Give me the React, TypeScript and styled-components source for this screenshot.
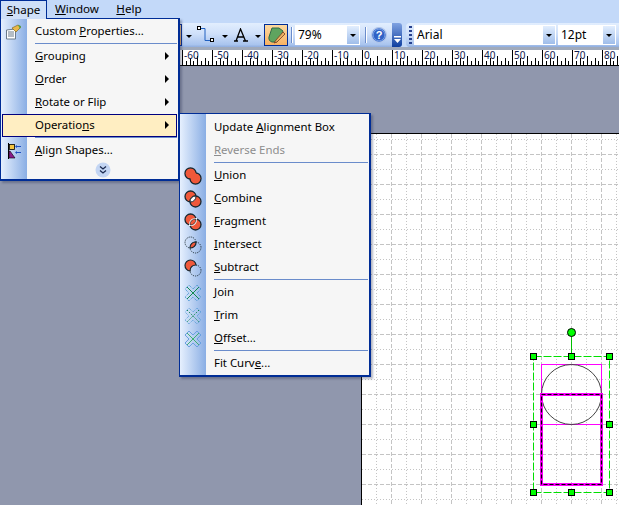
import React from 'react'
import styled, { createGlobalStyle } from 'styled-components'

const GlobalStyle = createGlobalStyle`
  html, body {
    margin: 0;
    padding: 0;
    overflow: hidden;
    background: #9097ad;
  }
  * {
    box-sizing: border-box;
  }
`

const Window = styled.div`
  position: relative;
  width: 619px;
  height: 505px;
  overflow: hidden;
  display: flex;
  flex-direction: column;
  font-family: "Noto Sans", "Liberation Sans", sans-serif;
  font-size: 11.4px;
  color: #000;
`

const MenuBar = styled.div`
  display: flex;
  align-items: flex-start;
  height: 23px;
  flex: none;
  background: #c3d9f9;
`

const MenuTitle = styled.div<{ $open?: boolean; $width: number }>`
  width: ${p => p.$width}px;
  height: ${p => (p.$open ? 19 : 18)}px;
  text-align: center;
  line-height: 18px;
  font-size: 11.6px;
  ${p => p.$open && `
    background: #cfe0f8;
    border: 1px solid #002d96;
    border-bottom: none;
    position: relative;
    z-index: 3;
  `}
`

const ToolBand = styled.div`
  display: flex;
  height: 24px;
  flex: none;
  background: #c3d9f9;
`

const Toolbar = styled.div<{ $width: number }>`
  display: flex;
  align-items: center;
  width: ${p => p.$width}px;
  height: 24px;
  flex: none;
  background: linear-gradient(#e2eefe 0%, #cfe0fa 45%, #a9c4ee 90%, #8fadde 100%);
`

const ToolbarLeft = styled(Toolbar)`
  border-radius: 0 4px 4px 0;
  justify-content: flex-end;
`

const ToolbarRight = styled(Toolbar)`
  margin-left: 4px;
  border-radius: 4px 0 0 4px;
  padding-left: 3px;
  flex: 1;
`

const OrangeButton = styled.div<{ $width: number }>`
  display: flex;
  align-items: center;
  justify-content: center;
  width: ${p => p.$width}px;
  height: 22px;
  background: linear-gradient(#fcd9a0, #f8b263);
  border: 1px solid #002d96;
`

const DropArrow = styled.span<{ $gap?: number }>`
  width: 0;
  height: 0;
  margin: 2px ${p => p.$gap ?? 4}px 0 4px;
  border-left: 3px solid transparent;
  border-right: 3px solid transparent;
  border-top: 3px solid #000;
`

const Separator = styled.div`
  width: 1px;
  height: 16px;
  margin: 0 3px;
  background: #6a8ccb;
  box-shadow: 1px 0 0 #fff;
`

const Combo = styled.div<{ $width: number }>`
  display: flex;
  width: ${p => p.$width}px;
  height: 20px;
  padding: 1px;
  margin-right: 2px;
  background: #fff;
  font-size: 12px;
  line-height: 18px;
`

const ComboValue = styled.div`
  flex: 1;
  padding-left: 2px;
`

const ComboButton = styled.div`
  display: flex;
  align-items: center;
  justify-content: center;
  width: 12px;
  background: linear-gradient(#e2eefe, #9fbdea);
`

const ComboArrow = styled.span`
  width: 0;
  height: 0;
  border-left: 3px solid transparent;
  border-right: 3px solid transparent;
  border-top: 3px solid #000;
`

const ToolIcon = styled.div<{ $margin?: string }>`
  display: flex;
  align-items: center;
  margin: ${p => p.$margin ?? '0'};
`

const Overflow = styled.div`
  display: flex;
  flex-direction: column;
  align-items: center;
  justify-content: flex-end;
  width: 10px;
  height: 24px;
  margin-left: 5px;
  padding-bottom: 3px;
  border-radius: 0 3px 3px 0;
  background: linear-gradient(#7fa2e2, #0f3f9f);
`

const Grip = styled.div`
  width: 3px;
  height: 18px;
  margin-right: 2px;
  background: repeating-linear-gradient(#27418f 0 2px, transparent 2px 4px);
`

const RulerStrip = styled.svg`
  display: block;
  flex: none;
  width: 619px;
  height: 19px;
  background: #fff;
`

const Workspace = styled.div`
  flex: 1;
  display: flex;
  padding: 67px 0 0 361px;
  background: #9097ad;
`

const Page = styled.div`
  position: relative;
  flex: 1;
  border-left: 1px solid #000;
  border-top: 1px solid #000;
  background: #fff;
`

const Canvas = styled.svg`
  position: absolute;
  left: 0;
  top: 0;
  width: 257px;
  height: 371px;
`

const Menu = styled.div<{ $left: number; $top: number; $width: number; $pad: string }>`
  position: absolute;
  z-index: 2;
  left: ${p => p.$left}px;
  top: ${p => p.$top}px;
  width: ${p => p.$width}px;
  padding: ${p => p.$pad};
  border: 2px solid #002d96;
  border-width: 1px 2px 2px 1px;
  background: linear-gradient(90deg, #e6f0fe 0, #8aaee4 26px, #f6f6f6 26px);
  box-shadow: 2px 2px 2px rgba(40, 50, 80, 0.35);
`

const Item = styled.div<{ $hot?: boolean; $disabled?: boolean; $indent: number }>`
  display: flex;
  align-items: center;
  height: 23px;
  padding-left: ${p => p.$indent}px;
  padding-bottom: 2px;
  position: relative;
  color: ${p => (p.$disabled ? '#8d8d8d' : '#000')};
  ${p => p.$hot && `
    background: #ffeec2;
    outline: 1px solid #000080;
    outline-offset: -1px;
  `}
`

const ItemIcon = styled.span`
  position: absolute;
  left: 3px;
  top: 3px;
  width: 18px;
  height: 18px;
`

const ItemLabel = styled.span`
  flex: 1;
  white-space: pre;
`

const Arrow = styled.span`
  width: 0;
  height: 0;
  margin-right: 8px;
  border-top: 4px solid transparent;
  border-bottom: 4px solid transparent;
  border-left: 4px solid #000;
`

const Rule = styled.div<{ $indent: number }>`
  height: 1px;
  margin: 0 0 1px ${p => p.$indent}px;
  background: #6a8ccb;
`

const Expand = styled.div`
  display: flex;
  align-items: center;
  justify-content: center;
  height: 16px;
  padding-left: 26px;
`

const ExpandDot = styled.svg`
  width: 16px;
  height: 16px;
`

const Accel = ({ text, at }: { text: string; at: number }) => (
  <>
    {text.slice(0, at)}
    <u>{text[at]}</u>
    {text.slice(at + 1)}
  </>
)

const Red = '#f0583a'
const Edge = '#182830'
const Lens = 'M11.98 6.02A5.5 5.5 0 0 1 6.02 11.98 5.5 5.5 0 0 1 11.98 6.02z'
const Cross = 'M9 5l4-4 4 4-4 4 4 4-4 4-4-4-4 4-4-4 4-4-4-4 4-4z'

function OpIcon({ kind }: { kind: string }) {
  const common = { width: 18, height: 18, viewBox: '0 0 18 18' }
  if (kind === 'union')
    return (
      <svg {...common}>
        <circle cx="6.5" cy="6.5" r="5.5" fill={Red} stroke={Edge} strokeWidth="1.4" />
        <circle cx="11.5" cy="11.5" r="5.5" fill={Red} stroke={Edge} strokeWidth="1.4" />
        <circle cx="6.5" cy="6.5" r="4.8" fill={Red} />
        <circle cx="11.5" cy="11.5" r="4.8" fill={Red} />
        <path d="M6 8l4 4 2-6-4-2z" fill={Red} />
      </svg>
    )
  if (kind === 'combine')
    return (
      <svg {...common}>
        <circle cx="6.5" cy="6.5" r="5.5" fill={Red} stroke={Edge} strokeWidth="1.3" />
        <circle cx="11.5" cy="11.5" r="5.5" fill={Red} stroke={Edge} strokeWidth="1.3" />
        <path d={Lens} fill="#fff" stroke={Edge} strokeWidth="1" />
      </svg>
    )
  if (kind === 'fragment')
    return (
      <svg {...common}>
        <circle cx="6.5" cy="6.5" r="5.5" fill={Red} stroke={Edge} strokeWidth="1.3" />
        <circle cx="11.5" cy="11.5" r="5.5" fill={Red} stroke={Edge} strokeWidth="1.3" />
        <path d={Lens} fill={Red} stroke="#fff" strokeWidth="2.2" />
        <path d={Lens} fill={Red} stroke={Edge} strokeWidth=".7" />
      </svg>
    )
  if (kind === 'intersect')
    return (
      <svg {...common}>
        <circle cx="6.5" cy="6.5" r="5.5" fill="none" stroke={Edge} strokeWidth="1" strokeDasharray="1 1" />
        <circle cx="11.5" cy="11.5" r="5.5" fill="none" stroke={Edge} strokeWidth="1" strokeDasharray="1 1" />
        <path d={Lens} fill={Red} stroke={Edge} strokeWidth="1.1" />
      </svg>
    )
  if (kind === 'subtract')
    return (
      <svg {...common}>
        <circle cx="11.5" cy="11.5" r="5.5" fill="none" stroke={Edge} strokeWidth="1" strokeDasharray="1 1" />
        <path d="M11.98 6.02A5.5 5.5 0 1 0 6.02 11.98 5.5 5.5 0 0 1 11.98 6.02z" fill={Red} stroke={Edge} strokeWidth="1.2" />
      </svg>
    )
  return (
    <svg {...common}>
      <path
        d={Cross}
        fill="none"
        stroke={kind === 'offset' ? '#6aa0e0' : '#3f90d0'}
        strokeWidth="1"
        strokeDasharray={kind === 'offset' ? undefined : '1 1'}
        opacity={kind === 'trim' ? 0.8 : 1}
      />
      <path
        d="M3 3l12 12M15 3L3 15"
        stroke={kind === 'offset' ? '#40b070' : '#128a50'}
        strokeWidth="1"
        fill="none"
        strokeDasharray={kind === 'trim' ? '1.5 1.5' : undefined}
      />
    </svg>
  )
}

const PropertiesIcon = () => (
  <svg width="18" height="18" viewBox="0 0 18 18">
    <path d="M1.5 7l9-1v10h-9z" fill="#fff" stroke="#6b7a8a" />
    <path d="M3 9h6M3 11h6M3 13h6" stroke="#6b7a8a" />
    <path d="M7 5l6-3 3 2-5 5z" fill="#e8b84a" stroke="#8a6a20" strokeWidth=".7" />
    <path d="M13 2l3 1-1 3z" fill="#4aa04a" />
  </svg>
)

const AlignIcon = () => (
  <svg width="18" height="18" viewBox="0 0 18 18">
    <path d="M3.5 1v16" stroke="#000" />
    <rect x="4.5" y="2.5" width="5" height="5" fill="#f5c542" stroke="#000" strokeWidth=".8" />
    <path d="M4 9h1l5 7H4z" fill="#8a1a8a" stroke="#000" strokeWidth=".6" />
    <path d="M11 4.5h5M11 10.5h5" stroke="#2050c0" />
    <path d="M12 3l-2 1.5 2 1.5zM12 9l-2 1.5 2 1.5z" fill="#2050c0" />
  </svg>
)

const ConnectorIcon = () => (
  <svg width="18" height="18" viewBox="0 0 18 18">
    <path d="M3 2.5h5v12h6" fill="none" stroke="#2060c0" />
    <rect x="0.5" y="0.5" width="3" height="3" fill="#fff" stroke="#000" />
    <rect x="13.5" y="12.5" width="3" height="3" fill="#fff" stroke="#000" />
  </svg>
)

const ShapeFormatIcon = () => (
  <svg width="18" height="18" viewBox="0 0 18 18">
    <path d="M5 2h7l4 3-2 5-4 6H5a4 4 0 0 1-3-5z" fill="#5fa45f" stroke="#2f6a4a" />
    <path d="M16 6L9 14l-2 3 3-1 8-8z" fill="#e8b060" stroke="#7a3a20" strokeWidth=".8" />
  </svg>
)

const HelpIcon = () => (
  <svg width="16" height="16" viewBox="0 0 16 16">
    <circle cx="8" cy="8" r="7.4" fill="#3b6fd0" stroke="#b5c8ea" strokeWidth="1.2" />
    <circle cx="8" cy="8" r="5.8" fill="#2f62c6" stroke="#7fa3e4" strokeWidth=".8" />
    <text x="8" y="12" textAnchor="middle" fontSize="11" fontWeight="700" fontFamily="'Liberation Sans', sans-serif" fill="#fff">?</text>
  </svg>
)

const OverflowIcon = () => (
  <svg width="7" height="8" viewBox="0 0 7 8">
    <path d="M0 0h7v1.5H0zM0 3h7L3.5 7z" fill="#fff" />
  </svg>
)

const labels = [-60, -50, -40, -30, -20, -10, 0, 10, 20, 30, 40, 50, 60, 70, 80]

function Ruler() {
  const ticks = []
  for (let i = 0; i < 120; i++) {
    const x = Math.round(182 + i * 3.75)
    const step = i % 8
    const top = step === 0 ? 3 : step === 4 ? 9 : step % 2 === 0 ? 11 : 14
    ticks.push(<line key={i} x1={x + 0.5} x2={x + 0.5} y1={top} y2={18} stroke="#000" />)
  }
  return (
    <RulerStrip viewBox="0 0 619 19">
      <rect x="0" y="0" width="619" height="3" fill="#a0aabb" />
      {ticks}
      {labels.map((n, i) => (
        <text key={n} x={184 + i * 30} y={12} fontSize="10" fontFamily="'Noto Sans', sans-serif" fill="#102050">
          {n}
        </text>
      ))}
      <line x1="0" x2="619" y1="18.5" y2="18.5" stroke="#000" />
    </RulerStrip>
  )
}

function Drawing() {
  const lines = []
  for (let i = 0; i < 18; i++) {
    const x = 15 * i + 14.5
    lines.push(
      <line key={'v' + i} x1={x} x2={x} y1={0} y2={371} stroke="#c4c4c4" strokeDasharray={i % 2 === 1 ? '4 2' : '1 2'} />
    )
  }
  for (let i = 0; i < 26; i++) {
    const y = 15 * i + 5.5
    lines.push(
      <line key={'h' + i} x1={0} x2={257} y1={y} y2={y} stroke="#c4c4c4" strokeDasharray={i % 2 === 1 ? '4 2' : '1 2'} />
    )
  }
  const xs = [171.5, 209.5, 247.5]
  const ys = [222.5, 290.5, 358.5]
  const handles = xs.flatMap(x => ys.map(y => [x, y])).filter(([x, y]) => !(x === 209.5 && y === 290.5))
  return (
    <Canvas viewBox="0 0 257 371">
      {lines}
      <rect x="171.5" y="222.5" width="76" height="136" fill="none" stroke="#00e000" strokeDasharray="8 2" />
      <line x1="209.5" x2="209.5" y1="198" y2="222" stroke="#00c000" />
      <rect x="179.5" y="230.5" width="60" height="60" fill="none" stroke="#ff00ff" />
      <circle cx="209.5" cy="260.5" r="30" fill="none" stroke="#444" />
      <rect x="179.5" y="260.5" width="60" height="90" fill="none" stroke="#ff00ff" strokeWidth="3" />
      <rect x="179.5" y="260.5" width="60" height="90" fill="none" stroke="#000" strokeWidth="1.2" strokeDasharray="4 2" />
      {handles.map(([x, y]) => (
        <rect key={x + '-' + y} x={x - 3} y={y - 3} width="6" height="6" fill="#00ff00" stroke="#000" />
      ))}
      <circle cx="209.5" cy="198.5" r="4" fill="#00ff00" stroke="#000" />
    </Canvas>
  )
}

const shapeItems = [
  { label: 'Grouping', at: 0 },
  { label: 'Order', at: 0 },
  { label: 'Rotate or Flip', at: 0 },
]

const opsItems = [
  { label: 'Union', at: 0, icon: 'union' },
  { label: 'Combine', at: 0, icon: 'combine' },
  { label: 'Fragment', at: 0, icon: 'fragment' },
  { label: 'Intersect', at: 0, icon: 'intersect' },
  { label: 'Subtract', at: 0, icon: 'subtract' },
]

const pathItems = [
  { label: 'Join', at: 0, icon: 'join' },
  { label: 'Trim', at: 0, icon: 'trim' },
  { label: 'Offset...', at: 0, icon: 'offset' },
]

export default function App() {
  return (
    <Window>
      <GlobalStyle />
      <MenuBar>
        <MenuTitle $open $width={47}><Accel text="Shape" at={0} /></MenuTitle>
        <MenuTitle $width={60}><Accel text="Window" at={0} /></MenuTitle>
        <MenuTitle $width={44}><Accel text="Help" at={0} /></MenuTitle>
      </MenuBar>
      <ToolBand>
        <ToolbarLeft $width={402}>
          <OrangeButton $width={16} />
          <DropArrow />
          <ToolIcon $margin="0 3px 0 1px"><ConnectorIcon /></ToolIcon>
          <DropArrow />
          <ToolIcon $margin="0 3px 0 1px">
            <svg width="15" height="14" viewBox="0 0 15 14">
              <path d="M1 13h4M10 13h5M3 13L7.5 1 12.5 13M4.7 9h6" fill="none" stroke="#000" strokeWidth="1.3" />
            </svg>
          </ToolIcon>
          <DropArrow $gap={3} />
          <OrangeButton $width={24}><ShapeFormatIcon /></OrangeButton>
          <Separator />
          <Combo $width={65}>
            <ComboValue>79%</ComboValue>
            <ComboButton><ComboArrow /></ComboButton>
          </Combo>
          <Separator />
          <ToolIcon $margin="0 0 0 2px"><HelpIcon /></ToolIcon>
          <Overflow><OverflowIcon /></Overflow>
        </ToolbarLeft>
        <ToolbarRight $width={213}>
          <Grip />
          <Combo $width={142}>
            <ComboValue>Arial</ComboValue>
            <ComboButton><ComboArrow /></ComboButton>
          </Combo>
          <Combo $width={58}>
            <ComboValue>12pt</ComboValue>
            <ComboButton><ComboArrow /></ComboButton>
          </Combo>
        </ToolbarRight>
      </ToolBand>
      <Ruler />
      <Workspace>
        <Page>
          <Drawing />
        </Page>
      </Workspace>

      <Menu $left={0} $top={18} $width={180} $pad="1px">
        <Item $indent={33}>
          <ItemIcon><PropertiesIcon /></ItemIcon>
          <ItemLabel>Custom <Accel text="Properties..." at={0} /></ItemLabel>
        </Item>
        <Rule $indent={33} />
        {shapeItems.map(i => (
          <Item key={i.label} $indent={33}>
            <ItemLabel><Accel text={i.label} at={i.at} /></ItemLabel>
            <Arrow />
          </Item>
        ))}
        <Item $hot $indent={33}>
          <ItemLabel><Accel text="Operations" at={8} /></ItemLabel>
          <Arrow />
        </Item>
        <Rule $indent={33} />
        <Item $indent={33}>
          <ItemIcon><AlignIcon /></ItemIcon>
          <ItemLabel><Accel text="Align Shapes..." at={0} /></ItemLabel>
        </Item>
        <Expand>
          <ExpandDot viewBox="0 0 16 16">
            <circle cx="8" cy="8" r="7.5" fill="#c3d5f3" />
            <path d="M5 4.5l3 2.5 3-2.5M5 8.5l3 2.5 3-2.5" fill="none" stroke="#1a2a50" strokeWidth="1.3" />
          </ExpandDot>
        </Expand>
      </Menu>

      <Menu $left={179} $top={113} $width={192} $pad="2px 1px 0">
        <Item $indent={33}><ItemLabel>Update <Accel text="Alignment Box" at={0} /></ItemLabel></Item>
        <Item $disabled $indent={33}><ItemLabel><Accel text="Reverse Ends" at={0} /></ItemLabel></Item>
        <Rule $indent={33} />
        {opsItems.map(i => (
          <Item key={i.label} $indent={33}>
            <ItemIcon><OpIcon kind={i.icon} /></ItemIcon>
            <ItemLabel><Accel text={i.label} at={i.at} /></ItemLabel>
          </Item>
        ))}
        <Rule $indent={33} />
        {pathItems.map(i => (
          <Item key={i.label} $indent={33}>
            <ItemIcon><OpIcon kind={i.icon} /></ItemIcon>
            <ItemLabel><Accel text={i.label} at={i.at} /></ItemLabel>
          </Item>
        ))}
        <Rule $indent={33} />
        <Item $indent={33}><ItemLabel>Fit Curv<Accel text="e..." at={0} /></ItemLabel></Item>
      </Menu>
    </Window>
  )
}
